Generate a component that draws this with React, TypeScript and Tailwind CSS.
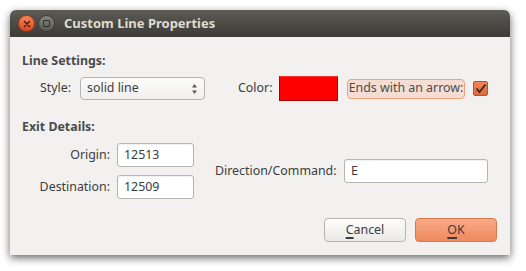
import React from "react";

const font = { fontFamily: '"Noto Sans", "Open Sans", "DejaVu Sans", sans-serif' };

function Input({ value, w }: { value: string; w: string }) {
  return (
    <div
      className={`${w} h-[24px] rounded-[3px] border border-[#b8b4ad] bg-white flex items-center pl-[6px] text-[#3c3c3c] shadow-[inset_0_1px_1px_rgba(0,0,0,0.06)]`}
    >
      {value}
    </div>
  );
}

export default function App() {
  return (
    <div className="w-[526px] h-[271px] bg-white p-[10px]" style={font}>
      <div className="w-[500px] h-[245px] rounded-t-[6px] bg-[#f2f1f0] shadow-[0_3px_9px_rgba(0,0,0,0.6)] flex flex-col">
        {/* Title bar */}
        <div className="h-[27px] rounded-t-[6px] bg-gradient-to-b from-[#5c5b55] to-[#3c3b37] flex items-center pl-[8px]">
          <div className="w-[17px] h-[17px] rounded-full bg-gradient-to-b from-[#f5845a] to-[#d9481b] border border-[#9f3a18] flex items-center justify-center">
            <svg width="8" height="8" viewBox="0 0 8 8">
              <path d="M1.5 1.5 L6.5 6.5 M6.5 1.5 L1.5 6.5" stroke="#3b1d10" strokeWidth="1.4" strokeLinecap="round" />
            </svg>
          </div>
          <div className="ml-[3px] w-[17px] h-[17px] rounded-full bg-gradient-to-b from-[#86847e] to-[#5a5853] border border-[#3a3935] flex items-center justify-center">
            <div className="w-[7px] h-[7px] border-[1.5px] border-[#2f2e2b] rounded-[1px]" />
          </div>
          <div className="ml-[9px] text-[13px] font-bold text-[#dfdbd2] whitespace-nowrap">
            Custom Line Properties
          </div>
        </div>

        {/* Body */}
        <div className="flex flex-col px-[12px] text-[12.4px] text-[#3c3c3c] whitespace-nowrap">
          <div className="mt-[15px] h-[18px] leading-[18px] font-bold text-[#4a4a4a]">Line Settings:</div>

          <div className="mt-[6px] h-[25px] flex items-center">
            <span className="ml-[18px] w-[34px]">Style:</span>
            <div className="ml-[6px] w-[125px] h-[23px] rounded-[4px] border border-[#b8b4ad] bg-gradient-to-b from-[#fbfbfa] to-[#f0efed] flex items-center pl-[6px] pr-[6px] justify-between">
              <span>solid line</span>
              <svg width="7" height="12" viewBox="0 0 7 12">
                <path d="M3.5 1 L6 4.5 L1 4.5 Z" fill="#5a5a5a" />
                <path d="M3.5 11 L6 7.5 L1 7.5 Z" fill="#5a5a5a" />
              </svg>
            </div>
            <span className="ml-[33px] w-[41px]">Color:</span>
            <div className="w-[59px] h-[25px] bg-[#ff0000] border border-[#a80000] border-t-[#ff3030]" />
            <div className="ml-[9px] w-[118px] h-[20px] rounded-[4px] border border-[#f2a07c] bg-[#f5ddd3] flex items-center justify-center text-[#4c4c4c] overflow-hidden">
              Ends with an arrow:
            </div>
            <div className="ml-[8px] w-[15px] h-[15px] rounded-[2px] bg-gradient-to-b from-[#f08558] to-[#e0683c] border border-[#b8522c] flex items-center justify-center">
              <svg width="12" height="11" viewBox="0 0 12 11">
                <path d="M1.5 5.5 L4.5 9 L10.5 1.5" stroke="#3a2a22" strokeWidth="1.8" fill="none" />
              </svg>
            </div>
          </div>

          <div className="mt-[17px] h-[18px] leading-[18px] font-bold text-[#4a4a4a]">Exit Details:</div>

          <div className="mt-[7px] flex items-center">
            <div className="flex flex-col gap-[8px]">
              <div className="flex items-center">
                <span className="w-[88px] text-right">Origin:</span>
                <div className="ml-[7px]">
                  <Input value="12513" w="w-[77px]" />
                </div>
              </div>
              <div className="flex items-center">
                <span className="w-[88px] text-right">Destination:</span>
                <div className="ml-[7px]">
                  <Input value="12509" w="w-[77px]" />
                </div>
              </div>
            </div>
            <span className="ml-[21px] w-[122px]">Direction/Command:</span>
            <div className="ml-[7px]">
              <Input value="E" w="w-[144px]" />
            </div>
          </div>

          <div className="mt-[19px] flex justify-end gap-[9px] pr-[1px]">
            <div className="w-[82px] h-[24px] rounded-[4px] border border-[#b9b5ae] bg-gradient-to-b from-[#fdfdfc] to-[#ebe9e6] flex items-center justify-center">
              <span>
                <span className="underline decoration-[2px] underline-offset-[3px]">C</span>ancel
              </span>
            </div>
            <div className="w-[82px] h-[24px] rounded-[4px] border border-[#d9774f] bg-gradient-to-b from-[#f8aa88] to-[#ee8a5e] flex items-center justify-center">
              <span>
                <span className="underline decoration-[2px] underline-offset-[3px]">O</span>K
              </span>
            </div>
          </div>
        </div>
      </div>
    </div>
  );
}
